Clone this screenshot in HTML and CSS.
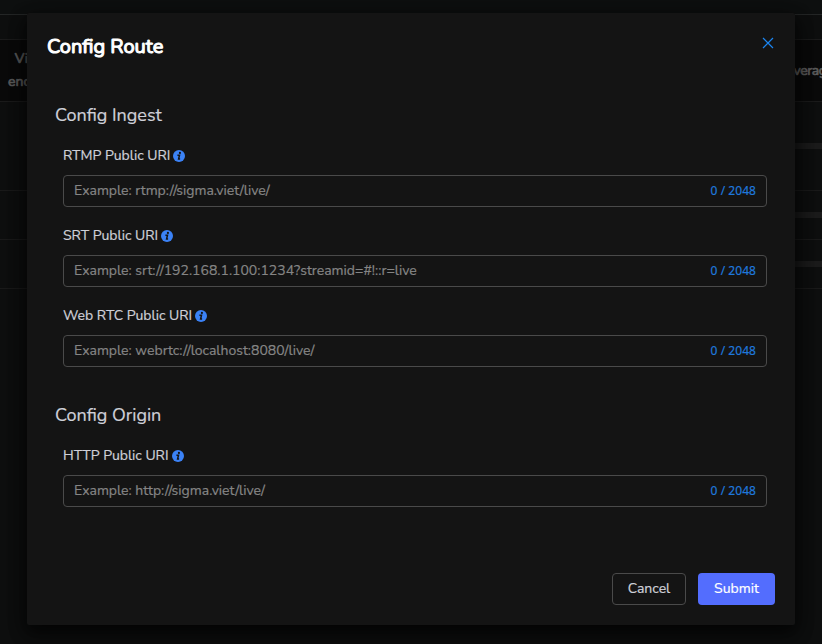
FILE: index.html
```
<!DOCTYPE html>
<html lang="en">
<head>
<meta charset="utf-8">
<title>Config Route</title>
<link rel="stylesheet" href="styles.css">
</head>
<body>
<svg class="defs" width="0" height="0">
  <symbol id="info" viewBox="0 0 12 12">
    <circle cx="6" cy="6" r="6" fill="#3b82f6"/>
    <circle cx="6.9" cy="2.9" r="1.1" fill="#141414"/>
    <path d="M4.4 5.2h2.1L5.6 9h1.5" fill="none" stroke="#141414" stroke-width="1.5"/>
  </symbol>
</svg>
<div class="page">
  <div class="topbar"></div>
  <div class="toolbar"></div>
  <div class="thead"><span class="col-video">Video<br>encoder</span><span class="col-average">Average</span></div>
  <div class="row tall"><i class="bar"></i></div>
  <div class="row"><i class="bar"></i></div>
  <div class="row"><i class="bar"></i></div>
</div>
<div class="overlay">
  <main class="modal">
    <header class="head">
      <h1>Config Route</h1>
      <svg class="close" viewBox="0 0 12 12"><path d="M1 1l10 10M11 1L1 11"/></svg>
    </header>
    <section>
      <h2>Config Ingest</h2>
      <div class="field">
        <div class="label"><span>RTMP Public URI</span><svg class="info"><use href="#info"/></svg></div>
        <div class="input"><span>Example: rtmp://sigma.viet/live/</span><span class="count">0 / 2048</span></div>
      </div>
      <div class="field">
        <div class="label"><span>SRT Public URI</span><svg class="info"><use href="#info"/></svg></div>
        <div class="input"><span>Example: srt://192.168.1.100:1234?streamid=#!::r=live</span><span class="count">0 / 2048</span></div>
      </div>
      <div class="field">
        <div class="label"><span>Web RTC Public URI</span><svg class="info"><use href="#info"/></svg></div>
        <div class="input"><span>Example: webrtc://localhost:8080/live/</span><span class="count">0 / 2048</span></div>
      </div>
    </section>
    <section>
      <h2>Config Origin</h2>
      <div class="field">
        <div class="label"><span>HTTP Public URI</span><svg class="info"><use href="#info"/></svg></div>
        <div class="input"><span>Example: http://sigma.viet/live/</span><span class="count">0 / 2048</span></div>
      </div>
    </section>
    <footer class="foot">
      <button class="btn cancel">Cancel</button>
      <button class="btn submit">Submit</button>
    </footer>
  </main>
</div>
</body>
</html>
```
FILE: styles.css
```
* { box-sizing: border-box; }
body { margin: 0; height: 644px; overflow: hidden; background: #0e0f0f; font: 14px/22px Nunito, Lato, sans-serif; color: #cfd0d8; -webkit-text-stroke: .2px currentColor; }
.defs { position: absolute; }
.page { height: 644px; overflow: hidden; }
.topbar { height: 15px; background: #0e1010; border-bottom: 1px solid #252727; }
.toolbar { height: 24px; background: #0e0f0f; }
.thead { height: 63px; background: #0a0a0a; border: 1px solid #1c1c1c; border-width: 1px 0; display: flex; justify-content: space-between; align-items: center; padding: 0 0 1px 8px; font: 14px/23px Nunito, Lato, sans-serif; color: #606060; -webkit-text-stroke: .7px #606060; }
.col-video { width: 50px; text-align: center; }
.col-average { width: 38px; white-space: nowrap; letter-spacing: -.4px; }
.row { height: 49px; border-bottom: 1px solid #1b1b1b; display: flex; align-items: center; justify-content: flex-end; }
.row.tall { height: 89px; }
.bar { width: 60px; height: 6px; background: #1c1c1c; }
.overlay { position: absolute; inset: 0; display: flex; justify-content: center; align-items: flex-start; padding-top: 13px; }
.modal { width: 768px; height: 612px; background: #141414; border-radius: 2px; padding: 20px; display: flex; flex-direction: column; box-shadow: 0 6px 16px rgba(0,0,0,.6), 0 9px 28px 8px rgba(0,0,0,.4); }
.head { display: flex; justify-content: space-between; height: 70px; }
h1 { margin: 0; font-size: 20px; line-height: 27px; font-weight: 400; color: #fff; -webkit-text-stroke: 1.1px #fff; }
.close { width: 12px; height: 12px; margin: 4px 1px 0 0; fill: none; stroke: #1b85f0; stroke-width: 1.2; }
section { padding-left: 8px; margin-bottom: 36px; }
h2 { margin: 0 0 18px; font-size: 18px; line-height: 24px; font-weight: 400; }
.field { padding: 0 8px; margin-bottom: 18px; }
.field:last-child { margin-bottom: 0; }
.label { height: 22px; margin-bottom: 8px; display: flex; align-items: center; gap: 3px; white-space: nowrap; }
.info { width: 12px; height: 12px; }
.input { height: 32px; border: 1px solid #4a4a4a; border-radius: 4px; padding: 0 10px; display: flex; justify-content: space-between; align-items: center; color: #858585; white-space: nowrap; }
.count { font: 12px/22px "Noto Sans", sans-serif; color: #1f78dc; letter-spacing: .05px; }
.foot { margin-top: auto; display: flex; justify-content: flex-end; gap: 12px; }
.btn { height: 32px; border-radius: 4px; padding: 0; font: 14px/20px Nunito, Lato, sans-serif; -webkit-text-stroke: .2px currentColor; }
.cancel { width: 74px; background: transparent; border: 1px solid #4a4a4a; color: #cfd0d8; }
.submit { width: 77px; background: #536dfe; border: 0; color: #fff; }
```
